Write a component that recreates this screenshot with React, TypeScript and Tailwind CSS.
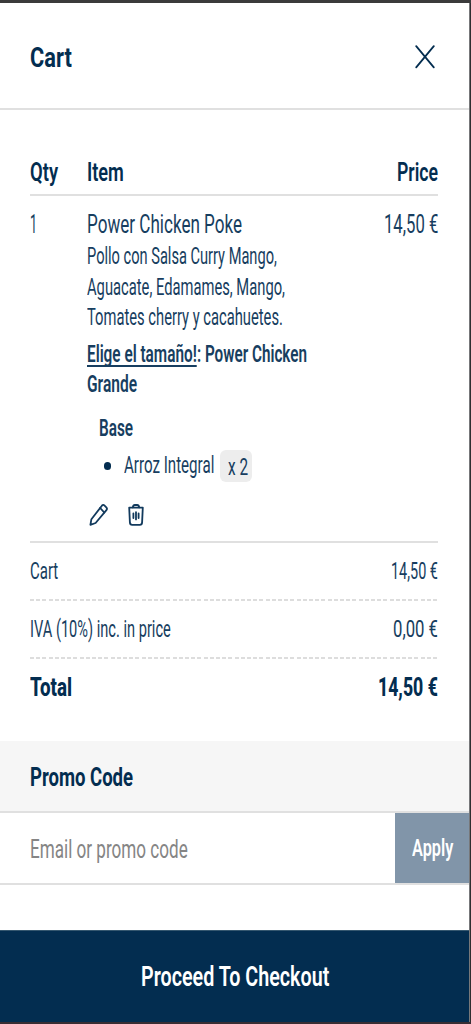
import React, { useLayoutEffect, useRef, useState } from 'react';

interface NarrowProps {
  width: number;
  className?: string;
  children: React.ReactNode;
}

// Condenses a single line of text to the given width
function Narrow({ width, className = '', children }: NarrowProps) {
  const ref = useRef<HTMLSpanElement>(null);
  const [scale, setScale] = useState(1);

  useLayoutEffect(() => {
    if (ref.current) {
      setScale(width / ref.current.offsetWidth);
    }
  }, [width]);

  return (
    <span className="inline-block text-left whitespace-nowrap" style={{ width }}>
      <span ref={ref} className={`inline-block origin-left ${className}`} style={{ transform: `scaleX(${scale})` }}>
        {children}
      </span>
    </span>
  );
}

function PencilIcon() {
  return (
    <svg className="h-6 w-5" viewBox="0 0 20 24" fill="none" stroke="currentColor" strokeWidth="1.8" strokeLinejoin="round" strokeLinecap="round">
      <path d="M1.4 21.8 L2.4 16.2 L12.9 2.7 Q14.2 1.2 15.6 2.6 L17.3 4.3 Q18.6 5.7 17.4 7.2 L6.6 20 Z" />
      <path d="M11.2 5 L15.2 9.5" />
    </svg>
  );
}

function TrashIcon() {
  return (
    <svg className="h-6 w-4" viewBox="0 0 16 24" fill="none" stroke="currentColor" strokeWidth="1.8" strokeLinejoin="round" strokeLinecap="round">
      <path d="M1.2 4.6 H14.8 L14.1 19.4 Q14 21.8 11.8 21.8 H4.2 Q2 21.8 1.9 19.4 Z" />
      <path d="M4.8 4.4 Q5.2 2 6.8 2 H9.2 Q10.8 2 11.2 4.4" />
      <path d="M5.4 10.5 V15 M8 9.2 V16.4 M10.6 10.5 V15" />
    </svg>
  );
}

export default function App() {
  const description = [
    { text: 'Pollo con Salsa Curry Mango,', width: 190 },
    { text: 'Aguacate, Edamames, Mango,', width: 198 },
    { text: 'Tomates cherry y cacahuetes.', width: 196 }
  ];

  const totals = [
    { label: 'Cart', labelWidth: 28, value: '14,50 €', valueWidth: 47 },
    { label: 'IVA (10%) inc. in price', labelWidth: 141, value: '0,00 €', valueWidth: 45 }
  ];

  return (
    <div className="flex h-[1024px] w-[471px] flex-col border-t-[3px] border-b-2 border-t-[#3b3b3b] border-b-[#382d33] bg-[#2e2f31] pr-px font-[Roboto,sans-serif] text-[#032d50]">
      <div className="flex flex-1 flex-col border-r border-[#77787a] bg-white">
        <header className="flex h-[107px] items-center justify-between border-b-2 border-[#e0e0e0] pt-[3px] pr-[34px] pl-[30px]">
          <h1 className="pt-[2px] text-[28px] leading-8 font-bold">
            <Narrow width={42}>Cart</Narrow>
          </h1>
          <svg className="h-6 w-5" viewBox="0 0 20 24" fill="none" stroke="currentColor" strokeWidth="1.8" strokeLinecap="round">
            <path d="M1.2 1.2 L18.8 22.3 M18.8 1.2 L1.2 22.3" />
          </svg>
        </header>

        <main className="flex flex-col pr-[31px] pl-[30px]">
          <div className="mt-[46px] flex h-[40px] border-b-2 border-[#e0e0e0] text-[25px] leading-[34px] font-semibold">
            <span className="w-[57px]">
              <Narrow width={28}>Qty</Narrow>
            </span>
            <span className="flex-1">
              <Narrow width={37}>Item</Narrow>
            </span>
            <Narrow width={41}>Price</Narrow>
          </div>

          <div className="flex h-[347px] border-b-2 border-[#e0e0e0] pt-[13px] text-[#173e60]">
            <div className="w-[57px] text-[25px] leading-8">
              <Narrow width={7}>1</Narrow>
            </div>
            <div className="flex-1">
              <div className="text-[25px] leading-8">
                <Narrow width={155}>Power Chicken Poke</Narrow>
              </div>
              {description.map((line) => (
                <div key={line.text} className="h-[30.5px] text-[23px] leading-[31px]">
                  <Narrow width={line.width}>{line.text}</Narrow>
                </div>
              ))}
              <div className="mt-[6px] text-[23px] leading-[31px] font-semibold">
                <div className="flex h-[30.5px]">
                  <Narrow width={110} className="underline decoration-2 underline-offset-[3px] [text-decoration-skip-ink:none]">Elige el tamaño!</Narrow>
                  <Narrow width={110}>: Power Chicken</Narrow>
                </div>
                <div className="h-[30.5px]">
                  <Narrow width={50}>Grande</Narrow>
                </div>
              </div>
              <div className="mt-[14px] h-[30px] pl-3 text-[23px] leading-[30px] font-semibold">
                <Narrow width={34}>Base</Narrow>
              </div>
              <div className="mt-[6px] flex h-8 items-center pl-[17px] text-[23px] leading-[35px]">
                <span className="mr-[13px] h-[8px] w-[7px] rounded-full bg-[#032d50]" />
                <Narrow width={90}>Arroz Integral</Narrow>
                <span className="ml-[6px] h-8 w-8 rounded-md bg-[#ededed] pl-2 text-[23px] leading-[35px]">
                  <Narrow width={20}>x 2</Narrow>
                </span>
              </div>
              <div className="mt-[21px] flex gap-[19px] pl-[2px] text-[#123a5d]">
                <PencilIcon />
                <TrashIcon />
              </div>
            </div>
            <div className="text-[25px] leading-8">
              <Narrow width={54}>14,50 €</Narrow>
            </div>
          </div>

          {totals.map((row) => (
            <div key={row.label} className="h-[58px] text-[23px] leading-[58px] text-[#173e60]">
              <div className="flex h-[56px] justify-between">
                <Narrow width={row.labelWidth}>{row.label}</Narrow>
                <Narrow width={row.valueWidth}>{row.value}</Narrow>
              </div>
              <div className="h-[2px] bg-[repeating-linear-gradient(90deg,#dddddd_0_4px,#ffffff_4px_6.2px)]" />
            </div>
          ))}

          <div className="flex h-[82px] justify-between text-[25px] leading-[57px] font-extrabold">
            <Narrow width={42}>Total</Narrow>
            <Narrow width={60}>14,50 €</Narrow>
          </div>
        </main>

        <section>
          <div className="h-[72px] border-b-2 border-[#e0e0e0] bg-[#f6f6f6] pl-[30px] text-[25px] leading-[73px] font-bold">
            <Narrow width={103}>Promo Code</Narrow>
          </div>
          <div className="flex h-[72px] border-b-2 border-[#e0e0e0]">
            <div className="flex-1 pl-[30px] text-[25px] leading-[73px] text-[#858585]">
              <Narrow width={158}>Email or promo code</Narrow>
            </div>
            <button className="w-[74px] bg-[#8195a9] pt-px text-[23px] leading-[69px] font-semibold text-white">
              <Narrow width={41}>Apply</Narrow>
            </button>
          </div>
        </section>

        <button className="mt-auto h-[92px] border-t border-[#35576f] bg-[#032d50] text-[28px] leading-[92px] font-semibold text-white">
          <Narrow width={188}>Proceed To Checkout</Narrow>
        </button>
      </div>
    </div>
  );
}
